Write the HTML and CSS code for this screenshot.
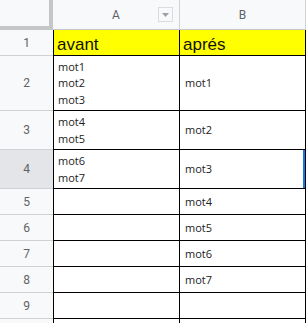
FILE: index.html
```html
<!DOCTYPE html>
<html lang="fr">
<head>
  <meta charset="UTF-8">
  <meta name="viewport" content="width=device-width, initial-scale=1.0">
  <title>Feuille</title>
<link rel="stylesheet" href="styles.css">
</head>
<body>
  <div class="sheet">
    <div class="corner"></div>
    <div class="col-head col-a">A<span class="filter"><svg width="7" height="4" viewBox="0 0 7 4"><path d="M0 0h7L3.5 4z" fill="#9aa0a6"/></svg></span></div>
    <div class="col-head">B</div>

    <div class="row-head">1</div>
    <div class="cell cell-a title">avant</div>
    <div class="cell title">aprés</div>

    <div class="row-head">2</div>
    <div class="cell cell-a"><span>mot1</span><span>mot2</span><span>mot3</span></div>
    <div class="cell">mot1</div>

    <div class="row-head">3</div>
    <div class="cell cell-a"><span>mot4</span><span>mot5</span></div>
    <div class="cell">mot2</div>

    <div class="row-head selected">4</div>
    <div class="cell cell-a"><span>mot6</span><span>mot7</span></div>
    <div class="cell active">mot3</div>

    <div class="row-head">5</div>
    <div class="cell cell-a"></div>
    <div class="cell">mot4</div>

    <div class="row-head">6</div>
    <div class="cell cell-a"></div>
    <div class="cell">mot5</div>

    <div class="row-head">7</div>
    <div class="cell cell-a"></div>
    <div class="cell">mot6</div>

    <div class="row-head">8</div>
    <div class="cell cell-a"></div>
    <div class="cell">mot7</div>

    <div class="row-head">9</div>
    <div class="cell cell-a"></div>
    <div class="cell"></div>

    <!-- ligne 10 : seul le haut est visible -->
    <div class="row-head last"></div>
    <div class="cell cell-a last"></div>
    <div class="cell last"></div>
  </div>
</body>
</html>
```

FILE: styles.css
```css
html, body {
  margin: 0;
  background: #fff;
  overflow: hidden;
}
.sheet {
  display: grid;
  grid-template-columns: 53px 127px 126px;
  grid-template-rows: 30px 26px 55px 39px 39px 26px 26px 26px 26px 26px 4px;
  font-family: "Open Sans", "Liberation Sans", sans-serif;
}
.sheet > div {
  box-sizing: border-box;
}

/* en-tetes */
.corner {
  background: #f8f9fa;
  border-right: 4px solid #c4c7c5;
  border-bottom: 4px solid #c4c7c5;
}
.col-head {
  position: relative;
  display: flex;
  align-items: center;
  justify-content: center;
  background: #f8f9fa;
  border-right: 1px solid #d0d3d6;
  border-bottom: 1px solid #c4c7c5;
  font-family: Roboto, "Liberation Sans", sans-serif;
  font-size: 12px;
  color: #5f6368;
}
.filter {
  position: absolute;
  left: 105px;
  top: 7px;
  width: 15px;
  height: 15px;
  box-sizing: border-box;
  border: 1px solid #dadce0;
  display: flex;
  align-items: center;
  justify-content: center;
}
.row-head {
  display: flex;
  align-items: center;
  justify-content: center;
  background: #f8f9fa;
  border-bottom: 1px solid #d0d3d6;
  font-family: Roboto, "Liberation Sans", sans-serif;
  font-size: 12px;
  color: #5f6368;
}
.row-head.selected {
  background: #e3e5e8;
}

/* cellules */
.cell {
  display: flex;
  flex-direction: column;
  justify-content: center;
  padding: 1px 4px 0 5px;
  border-right: 1px solid #000;
  border-bottom: 1px solid #000;
  font-size: 11px;
  line-height: 16.5px;
  color: #222;
}
.cell-a {
  border-left: 1px solid #000;
  padding-left: 4px;
}
.cell.title {
  justify-content: flex-end;
  padding: 0 4px 0 3px;
  background: #ffff00;
  font-family: "Liberation Sans", Arial, sans-serif;
  font-size: 17px;
  line-height: 20px;
  color: #111;
}
.cell.active {
  box-shadow: inset -2px 0 #1a73e8;
}
.sheet > .last {
  border-bottom: 0;
}
```
